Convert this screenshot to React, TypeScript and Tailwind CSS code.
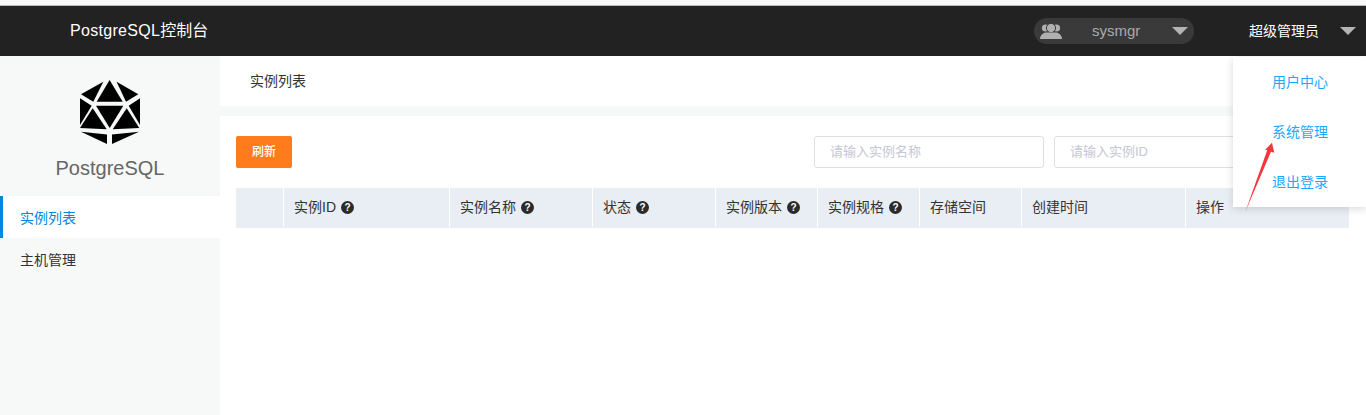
import React from "react";

const columns = [
  { title: "", width: "w-[48px]" },
  { title: "实例ID", width: "w-[166px]", help: true },
  { title: "实例名称", width: "w-[143px]", help: true },
  { title: "状态", width: "w-[123px]", help: true },
  { title: "实例版本", width: "w-[102px]", help: true },
  { title: "实例规格", width: "w-[102px]", help: true },
  { title: "存储空间", width: "w-[102px]" },
  { title: "创建时间", width: "w-[164px]" },
  { title: "操作", width: "flex-1" },
];

function Caret({ className }: { className: string }) {
  return (
    <svg width="16" height="8" viewBox="0 0 16 8" className={className}>
      <polygon points="0,0 16,0 8,8" fill="#b4b4b4" />
    </svg>
  );
}

function HelpDot() {
  return (
    <span className="ml-[5px] flex h-[13px] w-[13px] items-center justify-center rounded-full bg-[#2b2b2b] text-[10px] leading-none font-bold text-white">
      ?
    </span>
  );
}

function Logo() {
  return (
    <svg width="60" height="64" viewBox="0 0 60 64" fill="#000">
      <polygon points="29.6,0 16.7,21.7 42.7,21.7" />
      <polygon points="16,25.7 43.3,25.7 29.7,48" />
      <polygon points="23.3,1.700 1,14.3 13.3,21.7" />
      <polygon points="36.6,1.700 58.3,14.3 46,21.7" />
      <polygon points="0,18.3 11.700,25.7 0,45" />
      <polygon points="60,18.3 48.700,25.7 60,45" />
      <polygon points="12.700,28.3 26.700,49.3 0,48" />
      <polygon points="46.700,28.3 32.700,49.3 59.300,48" />
      <polygon points="1,51.700 27,54.500 27,64" />
      <polygon points="59,51.700 32,54.500 32,64" />
    </svg>
  );
}

export default function App() {
  return (
    <div className="relative flex h-[415px] w-[1366px] flex-col overflow-hidden bg-white font-['Liberation_Sans','Noto_Sans_CJK_SC',sans-serif] text-[14px] text-[#333]">
      <div className="h-[6px] border-b border-b-[#bbb] bg-[#f7f7f7]" />

      <header className="flex h-[50px] items-center bg-[#222] text-white">
        <div className="w-[220px] pl-[70px] text-[16px]">
          <span className="tracking-[0.3px]">PostgreSQL</span>控制台
        </div>
        <div className="flex-1" />
        <div className="flex h-[26px] w-[160px] items-center rounded-[13px] bg-[#3a3a3a] pl-[6px] text-[15px] text-[#aaa]">
          <svg width="22" height="18" viewBox="0 0 22 18" fill="#b0b0b0">
            <circle cx="5.500" cy="6" r="3.600" />
            <circle cx="16.500" cy="6" r="3.600" />
            <circle cx="11" cy="6" r="4.600" stroke="#3a3a3a" strokeWidth="1" />
            <path d="M0 17c0-3 1.500-5 5-6.500h12c3.500 1.500 5 3.500 5 6.500z" />
          </svg>
          <span className="ml-[30px]">sysmgr</span>
          <Caret className="ml-[32px]" />
        </div>
        <div className="ml-[55px]">超级管理员</div>
        <Caret className="mr-[10px] ml-[21px]" />
      </header>

      <div className="flex flex-1">
        <aside className="w-[220px] bg-[#f7f8f8]">
          <div className="flex h-[140px] flex-col items-center pt-[24px]">
            <Logo />
            <div className="mt-[12px] text-[20px] leading-[24px] text-[#666]">PostgreSQL</div>
          </div>
          <div className="flex h-[42px] items-center border-l-[3px] border-l-[#0087e0] bg-white pt-[2px] pl-[17px] text-[#0087e0]">
            实例列表
          </div>
          <div className="flex h-[42px] items-center pt-[2px] pl-[20px]">主机管理</div>
        </aside>

        <main className="flex flex-1 flex-col">
          <div className="flex h-[50px] items-center pl-[30px]">实例列表</div>
          <div className="h-[10px] bg-[#f7f8f8]" />
          <div className="pt-[20px] pr-[17px] pl-[16px]">
            <div className="flex items-center justify-between">
              <button className="h-[32px] w-[56px] rounded-[2px] bg-[#ff7c1c] text-[12px] font-medium text-white">刷新</button>
              <div className="flex gap-[10px]">
                <input
                  readOnly
                  placeholder="请输入实例名称"
                  className="h-[32px] w-[230px] rounded-[3px] border border-[#dcdfe6] pr-[15px] pb-[2px] pl-[15px] text-[13px] placeholder:text-[#c4c8d2]"
                />
                <input
                  readOnly
                  placeholder="请输入实例ID"
                  className="h-[32px] w-[230px] rounded-[3px] border border-[#dcdfe6] pr-[15px] pb-[2px] pl-[15px] text-[13px] placeholder:text-[#c4c8d2]"
                />
                <div className="w-[55px]" />
              </div>
            </div>
            <div className="mt-[20px] flex h-[40px] bg-[#e9eef5]">
              {columns.map((c, i) => (
                <div
                  key={i}
                  className={`flex h-[39px] items-center ${c.width} ${i < columns.length - 1 ? "border-r border-r-white" : ""} ${i === 0 ? "" : "pl-[10px]"}`}
                >
                  {c.title}
                  {c.help && <HelpDot />}
                </div>
              ))}
            </div>
          </div>
        </main>
      </div>

      <div className="absolute top-[57px] right-0 flex h-[150px] w-[133px] flex-col bg-white pl-[39px] text-[#1ca7ff] shadow-[0_2px_8px_rgba(0,0,0,0.15)]">
        <div className="flex h-[50px] items-center">用户中心</div>
        <div className="flex h-[50px] items-center">系统管理</div>
        <div className="flex h-[50px] items-center">退出登录</div>
      </div>

      {/* annotation arrow */}
      <svg width="40" height="80" viewBox="0 0 40 80" className="absolute top-[138px] left-[1240px]">
        <polygon points="32,4.700 25,12 27.300,12 5.300,73.700 31,13.700 34.300,14.700" fill="#f5363a" />
      </svg>
    </div>
  );
}
